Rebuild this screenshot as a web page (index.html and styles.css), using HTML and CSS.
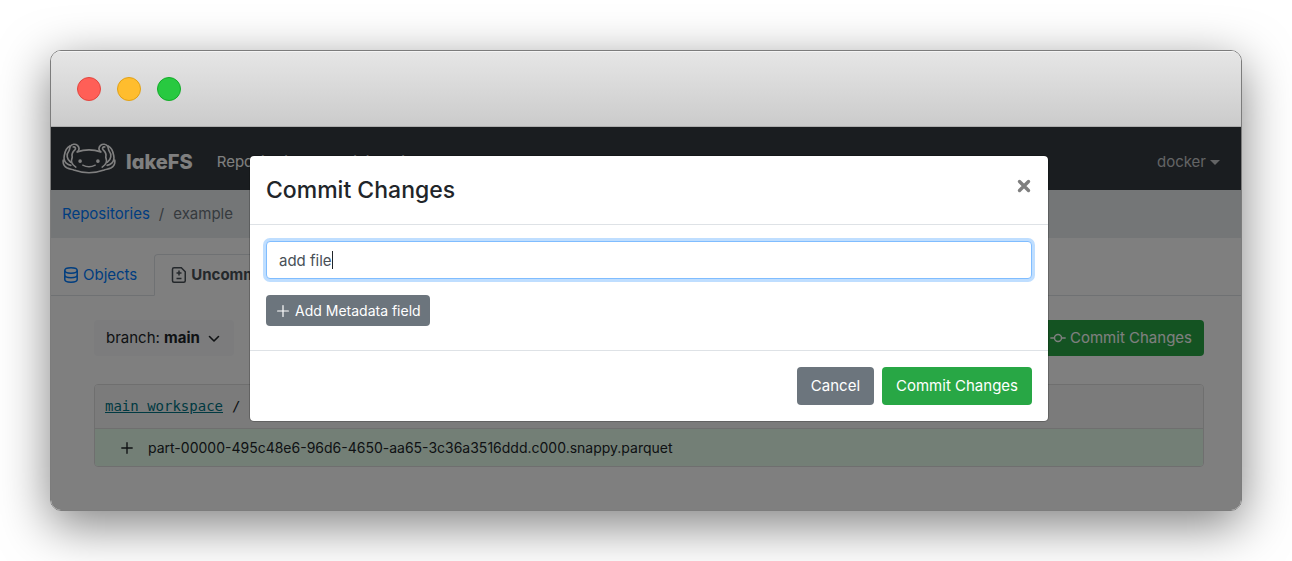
FILE: index.html
```
<!DOCTYPE html>
<html lang="en">
<head>
<meta charset="utf-8">
<title>lakeFS</title>
<link rel="stylesheet" href="styles.css">
</head>
<body>
<div class="window">
  <div class="titlebar">
    <span class="light light-close"></span>
    <span class="light light-min"></span>
    <span class="light light-max"></span>
  </div>
  <div class="app">
    <nav class="navbar">
      <a class="brand" href="#">
        <svg class="logo" viewBox="35 70 162 94" fill="none" stroke="currentColor" stroke-width="5" stroke-linecap="round" stroke-linejoin="round">
          <path d="M80 97Q116 85 152 97"/>
          <path d="M82 96C87 90 86 82 81 77C75 72 64 73 60 79C57 83 58 89 55 94C50 100 49 106 50 112C51 119 55 124 60 128"/>
          <path d="M58 79C47 84 43 97 41 108C39 118 41 125 47 131C52 136 56 137 61 138"/>
          <path d="M38 122C36 134 41 141 50 146C59 150 65 149 70 152C98 162 134 162 162 152C167 149 173 150 182 146C191 141 196 134 194 122"/>
          <path d="M68 82C75 81 77 87 73 91C66 97 63 104 65 112C66 117 60 122 64 130C66 136 70 139 76 143"/>
          <path d="M150 96C145 90 146 82 151 77C157 72 168 73 172 79C175 83 174 89 177 94C182 100 183 106 182 112C181 119 177 124 172 128"/>
          <path d="M174 79C185 84 189 97 191 108C193 118 191 125 185 131C180 136 176 137 171 138"/>
          <path d="M164 82C157 81 155 87 159 91C166 97 169 104 167 112C166 117 172 122 168 130C166 136 162 139 156 143"/>
          <path d="M97 137Q116 147 135 137" stroke-width="4"/>
          <circle cx="89" cy="125" r="3" fill="currentColor"/>
          <circle cx="143" cy="125" r="3" fill="currentColor"/>
        </svg>
        <span class="wordmark">lakeFS</span>
      </a>
      <a class="nav-link" href="#">Repositories</a>
      <a class="nav-link" href="#">Administration</a>
      <button class="user" type="button">docker<span class="caret"></span></button>
    </nav>
    <div class="crumbs">
      <a href="#">Repositories</a><span>/</span><span>example</span>
    </div>
    <div class="tabs">
      <a class="tab" href="#">
        <svg class="icon" viewBox="0 0 16 16" fill="none" stroke="currentColor" stroke-width="1.5"><ellipse cx="8" cy="3.5" rx="6.2" ry="2.7"/><path d="M1.800 3.500v9c0 1.500 2.800 2.700 6.200 2.700s6.200-1.200 6.200-2.700v-9M1.800 8c0 1.500 2.800 2.700 6.200 2.700s6.200-1.200 6.200-2.700"/></svg>
        Objects
      </a>
      <a class="tab tab-active" href="#">
        <svg class="icon" viewBox="0 0 16 16" fill="none" stroke="currentColor" stroke-width="1.5"><path d="M3 .75h7.300l3.950 3.950v9.050q0 1.500-1.500 1.500H3q-1.500 0-1.500-1.500V2.250Q1.500.75 3 .75zM8 3.500v5M5.500 6h5M5.500 11.500h5"/></svg>
        Uncommitted Changes
      </a>
    </div>
    <main class="content">
      <div class="toolbar">
        <button class="btn branch" type="button"><span>branch: <b>main</b></span>
          <svg class="chevron" viewBox="0 0 12 12" fill="none" stroke="currentColor" stroke-width="1.6" stroke-linecap="round" stroke-linejoin="round"><path d="M1.500 4.500l4.500 4.500L10.500 4.500"/></svg>
        </button>
        <button class="btn green" type="button">
          <svg class="icon" viewBox="0 0 16 16" fill="none" stroke="currentColor" stroke-width="1.4" stroke-linecap="round"><circle cx="8" cy="8" r="3.5"/><path d="M.8 8h3.700M11.500 8h3.700"/></svg>
          Commit Changes
        </button>
      </div>
      <section class="card">
        <div class="card-head"><a href="#">main workspace</a><span>/</span></div>
        <div class="card-row">
          <svg class="plus" viewBox="0 0 12 12" stroke="currentColor" stroke-width="1.4" stroke-linecap="round"><path d="M6 .8v10.400M.8 6h10.400"/></svg>
          part-00000-495c48e6-96d6-4650-aa65-3c36a3516ddd.c000.snappy.parquet
        </div>
      </section>
    </main>
    <div class="backdrop">
      <form class="modal" role="dialog" aria-labelledby="modal-title">
        <header class="modal-head">
          <h1 id="modal-title">Commit Changes</h1>
          <button class="close" type="button" aria-label="Close">
            <svg viewBox="0 0 14 14" stroke="currentColor" stroke-width="3.400" stroke-linecap="round"><path d="M2.500 2.500l9 9M11.500 2.500l-9 9"/></svg>
          </button>
        </header>
        <div class="modal-body">
          <div class="field">
            <input class="message" type="text" value="add file" aria-label="Commit message">
            <span class="cursor"></span>
          </div>
          <button class="btn small gray" type="button">
            <svg class="plus" viewBox="0 0 12 12" stroke="currentColor" stroke-width="1.2" stroke-linecap="round"><path d="M6 .6v10.800M.6 6h10.800"/></svg>
            Add Metadata field
          </button>
        </div>
        <footer class="modal-foot">
          <button class="btn gray" type="button">Cancel</button>
          <button class="btn green" type="submit">Commit Changes</button>
        </footer>
      </form>
    </div>
  </div>
</div>
</body>
</html>
```
FILE: styles.css
```
* {
  box-sizing: border-box;
}
body {
  margin: 0;
  padding: 50px;
  background: #fff;
  color: #212529;
  font: 15px/24px Inter, "Liberation Sans", sans-serif;
}
a {
  color: #007bff;
  text-decoration: none;
}
button, input {
  font: inherit;
}
.window {
  border: 1px solid #7c7c7c;
  border-radius: 11px;
  overflow: hidden;
  box-shadow: 0 14px 50px rgba(0, 0, 0, .5);
}
.titlebar {
  display: flex;
  align-items: center;
  gap: 16px;
  height: 76px;
  padding: 0 26px;
  background: linear-gradient(#e6e6e6, #cbcbcb);
  border-bottom: 1px solid #adadad;
  box-shadow: inset 0 1px #f4f4f4;
}
.light {
  width: 24px;
  height: 24px;
  border: 1px solid;
  border-radius: 50%;
}
.light-close {
  background: #ff5f57;
  border-color: #e2463f;
}
.light-min {
  background: #ffbd2e;
  border-color: #e1a116;
}
.light-max {
  background: #28c940;
  border-color: #12ac28;
}
.app {
  position: relative;
  background: #fff;
}
.navbar {
  display: flex;
  align-items: center;
  height: 63px;
  padding: 7px 21px 0 11px;
  background: #343a40;
}
.brand {
  display: flex;
  align-items: center;
  gap: 10px;
  margin-right: 16px;
  color: #fff;
}
.logo {
  width: 54px;
  height: 31px;
  margin-bottom: 7px;
}
.wordmark {
  font-size: 20px;
  font-weight: 800;
  font-feature-settings: "cv11";
}
.nav-link {
  padding: 0 8px;
  color: #fff;
}
.user {
  display: flex;
  align-items: center;
  gap: 4px;
  margin-left: auto;
  padding: 0;
  border: 0;
  background: none;
  color: #c6c8ca;
}
.caret {
  border: 5px solid transparent;
  border-top-color: currentColor;
  border-bottom: 0;
}
.crumbs {
  display: flex;
  gap: 9px;
  padding: 12px 11px;
  background: #e9ecef;
  color: #6c757d;
}
.tabs {
  display: flex;
  margin-top: 16px;
  border-bottom: 1px solid #dee2e6;
}
.tab {
  display: flex;
  align-items: center;
  gap: 4px;
  height: 42px;
  margin-bottom: -1px;
  padding: 0 16px 0 11px;
  border: 1px solid transparent;
  border-radius: 4px 4px 0 0;
}
.tab-active {
  padding: 0 16px;
  border-color: #dee2e6 #dee2e6 #fff;
  color: #495057;
  font-weight: 700;
}
.icon {
  width: 16px;
  height: 16px;
}
.content {
  padding: 24px 37px 43px 43px;
}
.toolbar {
  display: flex;
  justify-content: space-between;
}
.btn {
  display: flex;
  align-items: center;
  gap: 4px;
  height: 38px;
  padding: 0 14px;
  border: 0;
  border-radius: 4px;
  color: #fff;
}
.toolbar .btn {
  height: 36px;
  padding: 0 12px;
}
.gray {
  background: #6c757d;
}
.green {
  background: #28a745;
}
.toolbar .branch {
  gap: 8px;
  padding: 0 14px 0 12px;
  background: #f8f9fa;
  color: #212529;
}
.chevron {
  width: 12px;
  height: 12px;
}
.card {
  margin-top: 28px;
  border: 1px solid #dfdfdf;
  border-radius: 4px;
  overflow: hidden;
}
.card-head {
  display: flex;
  gap: 9px;
  padding: 9px 10px 10px;
  background: #f7f7f7;
  border-bottom: 1px solid #dfdfdf;
  font: 14px/24px "DejaVu Sans Mono", monospace;
}
.card-head a {
  color: #007484;
  text-decoration: underline;
}
.card-row {
  display: flex;
  align-items: center;
  gap: 15px;
  height: 37px;
  padding: 0 26px;
  background: #e6ffed;
  font-size: 14px;
}
.plus {
  width: 12px;
  height: 12px;
}
.backdrop {
  position: absolute;
  inset: 0;
  display: flex;
  align-items: flex-start;
  justify-content: center;
  padding: 28px 0 0 6px;
  background: rgba(0, 0, 0, .5);
}
.modal {
  width: 800px;
  max-width: 90%;
  border: 1px solid rgba(0, 0, 0, .2);
  border-radius: 5px;
  background: #fff;
  background-clip: padding-box;
}
.modal-head {
  display: flex;
  justify-content: space-between;
  align-items: flex-start;
  padding: 16px;
  border-bottom: 1px solid #dee2e6;
}
.modal-head h1 {
  margin: 0;
  font-size: 23px;
  line-height: 36px;
  font-weight: 500;
}
.close {
  display: flex;
  padding: 7px 1px;
  border: 0;
  background: none;
  color: #7f7f7f;
}
.close svg {
  width: 14px;
  height: 14px;
}
.modal-body {
  display: flex;
  flex-direction: column;
  align-items: flex-start;
  gap: 16px;
  padding: 16px 16px 24px;
}
.field {
  position: relative;
  width: 100%;
}
.message {
  display: block;
  width: 100%;
  height: 38px;
  padding: 0 12px;
  border: 1px solid #80bdff;
  border-radius: 4px;
  outline: 0;
  box-shadow: 0 0 0 3px #bfdeff;
  color: #495057;
}
.cursor {
  position: absolute;
  left: 66px;
  top: 10px;
  width: 1px;
  height: 18px;
  background: #212529;
}
.small {
  gap: 6px;
  height: 31px;
  padding: 0 9px 0 11px;
  font-size: 14px;
}
.modal-foot {
  display: flex;
  justify-content: flex-end;
  gap: 8px;
  padding: 16px;
  border-top: 1px solid #dee2e6;
}
```
